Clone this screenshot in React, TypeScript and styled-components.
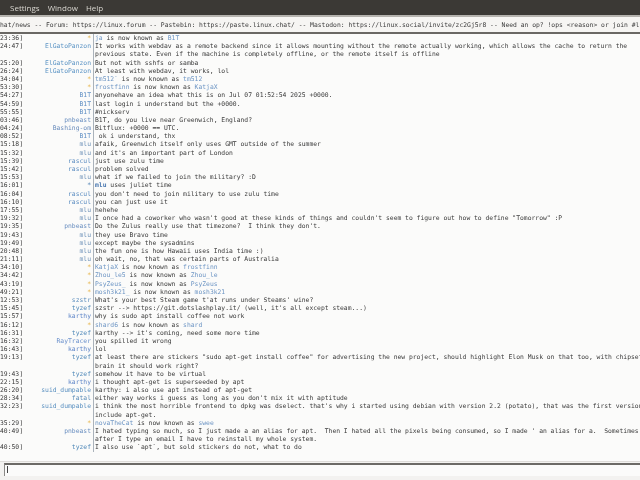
import React from "react";
import styled, { createGlobalStyle } from "styled-components";

const Global = createGlobalStyle`
  html, body { margin: 0; padding: 0; width: 640px; height: 480px; overflow: hidden; background: #fafafa; }
`;

const Window = styled.div`
  width: 640px;
  height: 480px;
  display: flex;
  flex-direction: column;
  overflow: hidden;
  background: #fbfbfa;
  filter: blur(0.35px);
`;

const MenuBar = styled.nav`
  height: 15px;
  flex: none;
  background: #3b3935;
  display: flex;
  align-items: center;
  gap: 8px;
  padding-left: 10px;
  font: 8px/15px "Open Sans", "Noto Sans", sans-serif;
  color: #d8d6d0;
`;

const Topic = styled.div`
  height: 19px;
  flex: none;
  box-sizing: border-box;
  background: #f6f5f3;
  border-top: 2px solid #b5b3ae;
  border-bottom: 2px solid #6a6864;
  font: 6.36px/15px "DejaVu Sans Mono", monospace;
  color: #3a3a3a;
  white-space: pre;
  overflow: hidden;
`;

const Log = styled.main`
  flex: 1;
  min-height: 0;
  font: 6.36px/8.2px "DejaVu Sans Mono", monospace;
  white-space: pre;
  overflow: hidden;
  color: #3a3a3a;
  background: #fbfbfa;
`;

const Row = styled.div`
  display: grid;
  grid-template-columns: 22px 67.5px 1px 1fr;
  column-gap: 1.5px;
  height: 8.2px;
`;

const Time = styled.span`
  color: #3a3a3a;
  overflow: hidden;
`;

const Nick = styled.span<{ $c?: string }>`
  text-align: right;
  color: ${(p) => p.$c ?? "#5b8ab8"};
`;

const Rule = styled.span`
  background: #aab2ba;
`;

const Line = styled.span``;

const Who = styled.span`
  color: #6d95c4;
`;

const Strong = styled.b`
  color: #4a78b0;
`;

const Star = styled.span`
  color: #e8b850;
`;

const InputBar = styled.footer`
  height: 19px;
  flex: none;
  box-sizing: border-box;
  background: #f3f2f0;
  border-top: 1px solid #dedcd9;
  padding: 1px 0 4px 4px;
  display: flex;
`;

const Input = styled.div`
  flex: 1;
  box-sizing: border-box;
  background: #fbfbfa;
  border-top: 2px solid #6c6a66;
  border-left: 1px solid #8a8885;
  padding: 1px 0 3px 2px;
`;

const Caret = styled.div`
  width: 1px;
  height: 100%;
  background: #444;
`;

type Msg = { t: string; n?: string; c?: React.ReactNode; k?: "star" };

const nickColors: Record<string, string> = {
  ElGatoPanzon: "#5a93c4",
  "Bashing-om": "#6a8cbc",
  pnbeast: "#6a8fc0",
  mlu: "#6e92b8",
  rascul: "#5a8cc0",
  tyzef: "#4f88b8",
  karthy: "#5f86c8",
  suid_dumpable: "#5a90c0",
  "B1T": "#5f8fc4",
  szstr: "#5a8cbc",
  RayTracer: "#6a90cc",
  fatal: "#5a8cb8",
};

const ren = (a: string, b: string): React.ReactNode => (
  <>
    <Who>{a}</Who> is now known as <Who>{b}</Who>
  </>
);

const rows: Msg[] = [
  { t: "23:36]", k: "star", c: ren("ja", "B1T") },
  { t: "24:47]", n: "ElGatoPanzon", c: "It works with webdav as a remote backend since it allows mounting without the remote actually working, which allows the cache to return the" },
  { t: "", c: "previous state. Even if the machine is completely offline, or the remote itself is offline" },
  { t: "25:20]", n: "ElGatoPanzon", c: "But not with sshfs or samba" },
  { t: "26:24]", n: "ElGatoPanzon", c: "At least with webdav, it works, lol" },
  { t: "34:04]", k: "star", c: ren("tm512`", "tm512") },
  { t: "53:30]", k: "star", c: ren("frostfinn", "KatjaX") },
  { t: "54:27]", n: "B1T", c: "anyonehave an idea what this is on Jul 07 01:52:54 2025 +0000." },
  { t: "54:59]", n: "B1T", c: "last login i understand but the +0000." },
  { t: "55:55]", n: "B1T", c: "#nickserv" },
  { t: "03:46]", n: "pnbeast", c: "B1T, do you live near Greenwich, England?" },
  { t: "04:24]", n: "Bashing-om", c: "Bitflux: +0000 == UTC." },
  { t: "08:52]", n: "B1T", c: " ok i understand, thx" },
  { t: "15:18]", n: "mlu", c: "afaik, Greenwich itself only uses GMT outside of the summer" },
  { t: "15:32]", n: "mlu", c: "and it's an important part of London" },
  { t: "15:39]", n: "rascul", c: "just use zulu time" },
  { t: "15:42]", n: "rascul", c: "problem solved" },
  { t: "15:53]", n: "mlu", c: "what if we failed to join the military? :D" },
  { t: "16:01]", n: "*", c: <><Strong>mlu</Strong> uses juliet time</> },
  { t: "16:04]", n: "rascul", c: "you don't need to join military to use zulu time" },
  { t: "16:10]", n: "rascul", c: "you can just use it" },
  { t: "17:55]", n: "mlu", c: "hehehe" },
  { t: "19:32]", n: "mlu", c: "I once had a coworker who wasn't good at these kinds of things and couldn't seem to figure out how to define \"Tomorrow\" :P" },
  { t: "19:35]", n: "pnbeast", c: "Do the Zulus really use that timezone?  I think they don't." },
  { t: "19:43]", n: "mlu", c: "they use Bravo time" },
  { t: "19:49]", n: "mlu", c: "except maybe the sysadmins" },
  { t: "20:48]", n: "mlu", c: "the fun one is how Hawaii uses India time :)" },
  { t: "21:11]", n: "mlu", c: "oh wait, no, that was certain parts of Australia" },
  { t: "34:10]", k: "star", c: ren("KatjaX", "frostfinn") },
  { t: "34:42]", k: "star", c: ren("Zhou_le5", "Zhou_le") },
  { t: "43:19]", k: "star", c: ren("PsyZeus_", "PsyZeus") },
  { t: "49:21]", k: "star", c: ren("mosh3k21_", "mosh3k21") },
  { t: "12:53]", n: "szstr", c: "What's your best Steam game t'at runs under Steams' wine?" },
  { t: "15:45]", n: "tyzef", c: "szstr --> https://git.dotslashplay.it/ (well, it's all except steam...)" },
  { t: "15:57]", n: "karthy", c: "why is sudo apt install coffee not work" },
  { t: "16:12]", k: "star", c: ren("shard6", "shard") },
  { t: "16:31]", n: "tyzef", c: "karthy --> it's coming, need some more time" },
  { t: "16:32]", n: "RayTracer", c: "you spilled it wrong" },
  { t: "16:43]", n: "karthy", c: "lol" },
  { t: "19:13]", n: "tyzef", c: "at least there are stickers \"sudo apt-get install coffee\" for advertising the new project, should highlight Elon Musk on that too, with chipset" },
  { t: "", c: "brain it should work right?" },
  { t: "19:43]", n: "tyzef", c: "somehow it have to be virtual" },
  { t: "22:15]", n: "karthy", c: "i thought apt-get is superseeded by apt" },
  { t: "26:20]", n: "suid_dumpable", c: "karthy: i also use apt instead of apt-get" },
  { t: "28:34]", n: "fatal", c: "either way works i guess as long as you don't mix it with aptitude" },
  { t: "32:23]", n: "suid_dumpable", c: "i think the most horrible frontend to dpkg was dselect. that's why i started using debian with version 2.2 (potato), that was the first version" },
  { t: "", c: "include apt-get." },
  { t: "35:29]", k: "star", c: ren("novaTheCat", "swee") },
  { t: "40:49]", n: "pnbeast", c: "I hated typing so much, so I just made a an alias for apt.  Then I hated all the pixels being consumed, so I made ' an alias for a.  Sometimes" },
  { t: "", c: "after I type an email I have to reinstall my whole system." },
  { t: "40:50]", n: "tyzef", c: "I also use `apt`, but sold stickers do not, what to do" },
];

export default function App() {
  return (
    <Window>
      <Global />
      <MenuBar>
        <span>Settings</span>
        <span>Window</span>
        <span>Help</span>
      </MenuBar>
      <Topic>hat/news -- Forum: https://linux.forum -- Pastebin: https://paste.linux.chat/ -- Mastodon: https://linux.social/invite/zc2Gj5r8 -- Need an op? !ops &lt;reason&gt; or join #l</Topic>
      <Log>
        {rows.map((r, i) => (
          <Row key={i}>
            <Time>{r.t}</Time>
            {r.k === "star" ? (
              <Nick><Star>*</Star></Nick>
            ) : (
              <Nick $c={r.n ? nickColors[r.n] : undefined}>{r.n}</Nick>
            )}
            <Rule />
            <Line>{r.c}</Line>
          </Row>
        ))}
      </Log>
      <InputBar>
        <Input><Caret /></Input>
      </InputBar>
    </Window>
  );
}
